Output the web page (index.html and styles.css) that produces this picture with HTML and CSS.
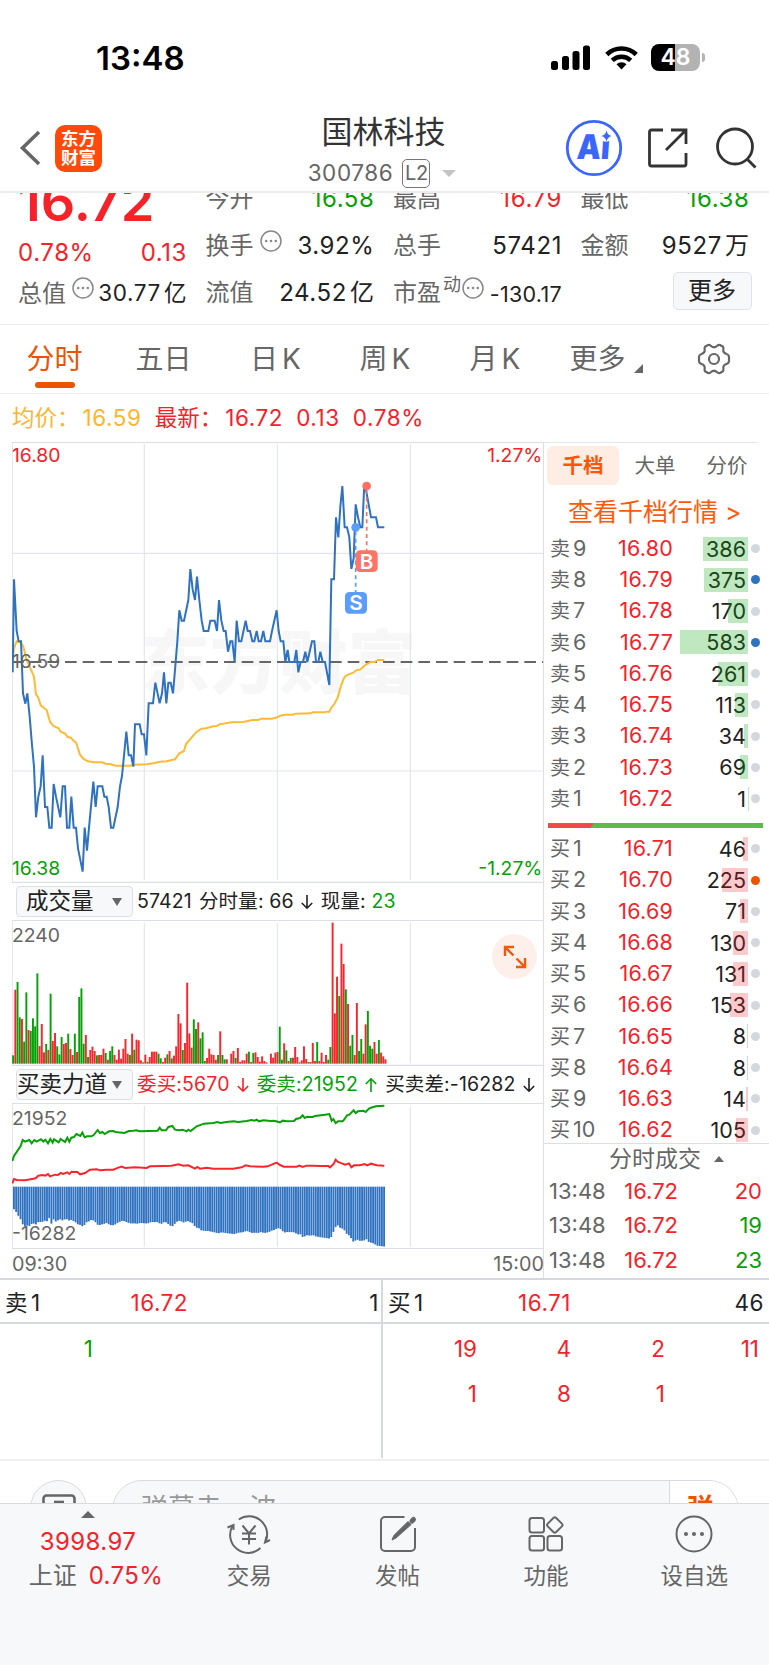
FILE: index.html
```html
<!DOCTYPE html>
<html lang="zh-CN">
<head>
    <meta charset="UTF-8">
    <title>国林科技 300786</title>
    <link rel="stylesheet" href="styles.css">
</head>
<body>
    <div class="status-bar">
        <span class="clock">13:48</span>
        <div class="status-icons">
            <svg width="40" height="26" viewBox="0 0 40 26">
                <rect x="0" y="16" width="7" height="9" rx="2.5"/>
                <rect x="11" y="11" width="7" height="14" rx="2.5"/>
                <rect x="21.500" y="6" width="7" height="19" rx="2.500"/>
                <rect x="32" y="0.500" width="7" height="24.500" rx="2.500"/>
            </svg>
            <svg class="wifi" width="33" height="26" viewBox="0 0 33 26" fill="none" stroke="#000" stroke-width="4.600">
                <path d="M1.800 9.500a21 21 0 0 1 29.400 0"/>
                <path d="M7.300 15.400a13.500 13.500 0 0 1 18.400 0"/>
                <path d="M16.500 24.500l-5-5.300a7.500 7.500 0 0 1 10 0z" fill="#000" stroke="none"/>
            </svg>
            <div class="battery"><span>48</span></div>
            <i class="battery-nub"></i>
        </div>
    </div>

    <header class="header">
        <div class="header-left">
            <svg width="22" height="36" viewBox="0 0 22 36" fill="none" stroke="#666" stroke-width="3.600">
                <path d="M20 2L3.500 18 20 34"/>
            </svg>
            <div class="logo">东方<br>财富</div>
        </div>
        <div class="title-box">
            <div class="title">国林科技</div>
            <div class="code"><span class="digits">300786</span><span class="level">L2</span><i class="caret"></i></div>
        </div>
        <div class="header-right">
            <svg width="58" height="58" viewBox="0 0 58 58">
                <circle cx="29" cy="29" r="26.700" fill="#fff" stroke="#3a66ff" stroke-width="2.800"/>
                <text class="ai" x="14" y="40.500" textLength="33" lengthAdjust="spacingAndGlyphs" transform="skewX(-4)">Ai</text>
                <circle cx="41" cy="16.500" r="6.200" fill="#fff"/>
                <path d="M41.500 11.500q1 4.500 5 5.500q-4 1-5 5.500q-1-4.500-5-5.500q4-1 5-5.500z" fill="#3a66ff"/>
            </svg>
            <svg class="share" width="42" height="42" viewBox="0 0 42 42" fill="none" stroke="#333" stroke-width="2.800">
                <path d="M16 3H4.500a2 2 0 0 0-2 2v32a2 2 0 0 0 2 2H37a2 2 0 0 0 2-2V26"/>
                <path d="M24 3h15v14M39 3L19 23"/>
            </svg>
            <svg class="search" width="42" height="42" viewBox="0 0 42 42" fill="none" stroke="#333" stroke-width="2.800">
                <circle cx="20" cy="19.500" r="17.500"/>
                <path d="M32 32l8.500 8.500"/>
            </svg>
        </div>
    </header>

    <section class="quote">
        <div class="quote-grid">
            <div class="col col-main">
                <div class="big red">16.72</div>
                <div class="cell change red"><span>0.78%</span><span>0.13</span></div>
                <div class="cell last">
                    <span class="name">总值<svg class="info"><use href="#dots"/></svg></span>
                    <span class="val small">30.77<i class="unit">亿</i></span>
                </div>
            </div>
            <div class="col">
                <div class="cell"><span class="name">今开</span><span class="green">16.58</span></div>
                <div class="cell"><span class="name">换手<svg class="info"><use href="#dots"/></svg></span><span class="val">3.92%</span></div>
                <div class="cell"><span class="name">流值</span><span class="val">24.52<i class="unit">亿</i></span></div>
            </div>
            <div class="col">
                <div class="cell"><span class="name">最高</span><span class="red">16.79</span></div>
                <div class="cell"><span class="name">总手</span><span class="val">57421</span></div>
                <div class="cell"><span class="name">市盈<sup>动</sup><svg class="info tight"><use href="#dots"/></svg></span><span class="val pe">-130.17</span></div>
            </div>
            <div class="col">
                <div class="cell"><span class="name">最低</span><span class="green">16.38</span></div>
                <div class="cell"><span class="name">金额</span><span class="val">9527<i class="unit">万</i></span></div>
                <div class="cell"><button class="more">更多</button></div>
            </div>
        </div>
    </section>

    <nav class="tabs">
        <span class="tab active">分时</span>
        <span class="tab">五日</span>
        <span class="tab">日<b>K</b></span>
        <span class="tab">周<b>K</b></span>
        <span class="tab">月<b>K</b></span>
        <span class="tab">更多<i class="corner"></i></span>
        <span class="tab">
            <svg width="34" height="34" viewBox="-17 -17 34 34" fill="none" stroke="#666" stroke-width="2.200" stroke-linejoin="round">
                <path d="M-6 -14 Q-4 -14.500 -3 -13 Q0 -10.500 3 -13 Q4 -14.500 6 -14 L9 -12.200 Q9.800 -11 9.300 -9.500 Q9 -6 12.500 -5 Q14.500 -4.500 15 -2.500 V2.500 Q14.500 4.500 12.500 5 Q9 6 9.300 9.500 Q9.800 11 9 12.200 L6 14 Q4 14.500 3 13 Q0 10.500 -3 13 Q-4 14.500 -6 14 L-9 12.200 Q-9.800 11 -9.300 9.500 Q-9 6 -12.500 5 Q-14.500 4.500 -15 2.500 V-2.500 Q-14.500 -4.500 -12.500 -5 Q-9 -6 -9.300 -9.500 Q-9.800 -11 -9 -12.200 Z"/>
                <circle r="5"/>
            </svg>
        </span>
    </nav>

    <div class="legend">
        <span class="avg">均价：<em>16.59</em></span>
        <span class="red">最新：<em>16.72</em></span>
        <span class="red digits">0.13</span>
        <span class="red digits">0.78%</span>
    </div>

    <main class="board">
        <div class="charts">
            <!-- 分时走势 -->
            <svg class="chart" width="532" height="441" viewBox="36 36 1596 1323">
                <text class="watermark" x="422" y="774">东方财富</text>
                <path class="grid" d="M37 38V1356M433 42V1350M832 42V1350M1231 42V1350M36 370H1631M36 1023H1631"/>
                <path class="frame" d="M36 37.500H1632M36 1357H1632"/>
                <path class="mid" d="M36 696H1632"/>
                <polyline class="line yellow" points="38,690 42,655 50,634 63,638 70,650 80,690 102,740 108,793 115,803 122,826 140,840 150,875 160,888 175,894 182,905 195,911 203,921 213,923 221,933 228,937 240,974 250,986 262,993 280,997 305,997 318,1001 330,1002 347,1007 390,1007 402,1004 440,1003 460,1000 480,995 500,994 525,988 538,970 552,963 558,942 590,905 605,896 618,895 640,889 650,888 658,883 695,877 730,876 757,870 775,870 782,866 815,866 832,862 840,857 855,854 878,854 888,851 932,850 938,847 972,847 978,845 988,845 995,832 1003,822 1013,803 1022,770 1033,742 1041,735 1060,728 1068,721 1080,719 1090,710 1100,702 1112,696 1124,696 1134,690 1153,690"/>
                <polyline class="line blue" points="38,727 42,448 50,603 56,634 63,634 69,790 76,821 82,790 89,860 96,945 102,1010 108,1162 115,1100 122,1069 128,976 135,1131 142,1131 148,1193 155,1193 161,1062 168,1100 181,1162 188,1069 195,1069 201,1193 208,1193 214,1100 221,1193 228,1193 234,1255 248,1325 254,1193 261,1262 267,1193 280,1055 287,1131 293,1069 307,1069 313,1100 320,1100 326,1131 333,1193 340,1193 353,1131 360,1069 366,1038 379,905 386,976 393,976 400,1010 405,883 419,883 425,913 432,913 439,976 446,820 459,820 466,758 479,820 486,790 492,727 499,820 505,758 512,758 519,790 525,720 532,634 538,541 545,572 552,572 565,510 571,417 578,479 585,510 591,440 598,510 605,572 611,603 625,603 631,572 644,572 651,603 657,510 664,572 671,603 677,603 684,665 691,634 697,634 704,696 710,572 717,634 724,634 737,572 743,603 750,603 757,634 763,634 770,603 776,634 783,634 790,603 796,634 810,634 816,603 830,541 836,603 842,634 850,634 856,696 863,660 868,696 883,696 889,660 895,727 902,696 909,696 916,665 922,696 936,634 943,634 948,696 955,696 961,665 968,696 975,696 988,765 994,448 1002,448 1008,262 1015,322 1021,230 1027,168 1034,292 1041,292 1048,322 1054,417 1061,385 1067,223 1074,262 1081,292 1087,292 1093,160 1100,190 1113,262 1128,262 1134,292 1153,292"/>
                <path class="drop sell" d="M1067 304V487"/>
                <path class="drop buy" d="M1100 180V362"/>
                <circle cx="1067" cy="292" r="13" fill="#5b9dff"/>
                <circle cx="1100" cy="168" r="13" fill="#ff6f61"/>
                <rect x="1035" y="486" width="66" height="65" rx="13" fill="#5b9dff"/>
                <text class="flag" x="1068" y="541">S</text>
                <rect x="1067" y="361" width="66" height="65" rx="13" fill="#ff7467"/>
                <text class="flag" x="1100" y="416">B</text>
                <text class="axis up" x="36" y="95">16.80</text>
                <text class="axis" x="36" y="715">16.59</text>
                <text class="axis down" x="36" y="1335">16.38</text>
                <text class="axis up end" x="1627" y="95">1.27%</text>
                <text class="axis down end" x="1627" y="1335">-1.27%</text>
            </svg>

            <div class="toolbar">
                <div class="select"><span class="select-main">成交量</span><i class="down-caret"></i></div>
                <span>57421</span><span>分时量: 66</span><svg class="arrow"><use href="#arrow-down"/></svg><span>现量: <em class="green">23</em></span>
            </div>

            <!-- 成交量 -->
            <div class="pane">
                <svg class="chart" width="532" height="146" viewBox="36 120 1596 438">
                    <path class="grid" d="M37 122V556M433 129V550M832 129V550M1231 129V550"/>
                    <path class="frame" d="M36 121.500H1632M36 556H1632"/>
                    <g id="volume"></g>
                    <text class="axis" x="36" y="186">2240</text>
                </svg>
                <div class="expand">
                    <svg width="26" height="26" viewBox="0 0 26 26" fill="none" stroke="#ee5a0e" stroke-width="2.400">
                        <path d="M3 12V3h9M3 3l8.500 8.500M23 14v9h-9M23 23l-8.500-8.500"/>
                    </svg>
                </div>
            </div>

            <div class="toolbar force">
                <div class="select"><span>买卖力道</span><i class="down-caret"></i></div>
                <span class="red">委买:5670</span><svg class="arrow red"><use href="#arrow-down"/></svg>
                <span class="green">委卖:21952</span><svg class="arrow green"><use href="#arrow-up"/></svg>
                <span>买卖差:-16282</span><svg class="arrow"><use href="#arrow-down"/></svg>
            </div>

            <!-- 买卖力道 -->
            <svg class="chart" width="532" height="146" viewBox="36 669 1596 438">
                <path class="grid" d="M37 671V1105M433 678V1100M832 678V1100M1231 678V1100"/>
                <path class="frame" d="M36 670.500H1632M36 1105.500H1632"/>
                <g id="force"></g>
                <polyline id="sellLine" class="line lime" points="37,843 42,828 62,798 68,780 75,785 88,780 95,790 103,780 110,785 123,778 130,785 136,779 144,790 151,777 158,788 162,778 176,787 182,777 195,786 202,773 208,785 214,773 222,771 229,762 241,768 247,758 254,772 261,769 274,769 281,765 293,750 300,759 307,756 314,762 327,754 340,753 346,756 373,759 387,753 400,752 410,751 418,754 473,752 479,743 485,751 498,751 505,741 517,738 525,749 538,751 548,749 560,754 565,749 572,753 590,739 612,731 640,729 652,726 662,729 680,726 700,724 715,726 740,723 755,720 764,722 770,719 777,724 790,721 812,723 822,722 840,727 848,722 860,724 882,723 888,717 900,714 908,706 914,714 922,710 938,711 945,708 975,704 988,702 995,722 1000,717 1007,729 1014,724 1028,724 1034,717 1041,706 1048,704 1061,691 1067,699 1074,694 1090,692 1097,696 1107,686 1113,683 1128,679 1153,677"/>
                <polyline id="buyLine" class="line crimson" points="37,910 42,897 50,900 75,901 100,896 108,894 115,887 128,885 136,887 144,882 150,889 165,884 174,885 182,879 190,882 202,877 208,882 215,875 232,876 240,883 255,879 270,869 290,868 300,871 320,869 340,869 355,863 365,860 375,864 405,862 440,864 450,859 490,858 515,857 535,853 550,857 565,856 585,866 592,861 600,866 620,863 640,866 700,866 725,862 737,856 750,859 790,860 803,859 815,854 830,848 840,855 852,860 890,860 898,857 908,861 920,857 940,857 960,858 985,858 990,862 1001,852 1007,839 1014,846 1025,850 1035,854 1047,850 1054,862 1062,856 1080,856 1094,852 1102,856 1113,851 1130,856 1153,857"/>
                <text class="axis" x="36" y="736">21952</text>
                <text class="axis" x="36" y="1081">-16282</text>
            </svg>
            <div class="time-axis"><span>09:30</span><span>15:00</span></div>
        </div>

        <aside class="depth">
            <div class="depth-tabs">
                <span class="depth-tab on">千档</span>
                <span class="depth-tab">大单</span>
                <span class="depth-tab">分价</span>
            </div>
            <div class="depth-link">查看千档行情 &gt;</div>
            <div class="orders" id="asks"></div>
            <div class="ratio"><i></i></div>
            <div class="orders bids" id="bids"></div>
            <div class="deals-title">分时成交<i class="up-caret"></i></div>
            <div class="deal"><span>13:48</span><span class="red">16.72</span><span class="red">20</span></div>
            <div class="deal"><span>13:48</span><span class="red">16.72</span><span class="green">19</span></div>
            <div class="deal"><span>13:48</span><span class="red">16.72</span><span class="green">23</span></div>
        </aside>
    </main>

    <section class="queue">
        <div class="side">
            <div class="side-head"><span>卖<b>1</b></span><span class="red">16.72</span><span>1</span></div>
            <div class="lots green"><span>1</span></div>
        </div>
        <div class="side">
            <div class="side-head"><span>买<b>1</b></span><span class="red">16.71</span><span>46</span></div>
            <div class="lots red"><span>19</span><span>4</span><span>2</span><span>11</span><span>1</span><span>8</span><span>1</span></div>
        </div>
    </section>

    <div class="danmu">
        <div class="danmu-icon">
            <svg width="34" height="26" viewBox="0 0 34 26" fill="none" stroke="#666" stroke-width="2.600">
                <rect x="1.500" y="1.500" width="31" height="24" rx="3"/>
                <path d="M12 8h10"/>
            </svg>
        </div>
        <div class="danmu-input"><span>弹幕走一波</span><b>弹</b></div>
    </div>

    <footer class="tabbar">
        <div class="index">
            <i class="up-caret"></i>
            <div class="red">3998.97</div>
            <div>上证<span class="red">0.75%</span></div>
        </div>
        <div class="item">
            <svg width="44" height="40" viewBox="0 0 44 40" fill="none" stroke="#666" stroke-width="2">
                <path d="M11.800 5.500A18 18 0 0 1 39 26.500M33.500 34A18 18 0 0 1 5.500 12"/>
                <path d="M.500 13.500l6-2.500 0 5M43 26l-5 2.500 1.500-6"/>
                <path d="M15.500 11.500l6.500 8 6.500-8M22 19.500v11M15 19.500h14M15 25h14"/>
            </svg>
            <span>交易</span>
        </div>
        <div class="item">
            <svg width="40" height="40" viewBox="0 0 40 40" fill="none" stroke="#666" stroke-width="2">
                <path d="M26.500 3H7a4 4 0 0 0-4 4v26a4 4 0 0 0 4 4h26a4 4 0 0 0 4-4V14"/>
                <path d="M14 26l1.800-4.500L30 7.500l3.200 3L18 24z" fill="#666" stroke-width="1"/>
                <path d="M34 7l1.500-1.500" stroke-width="5" stroke-linecap="round"/>
            </svg>
            <span>发帖</span>
        </div>
        <div class="item">
            <svg width="40" height="40" viewBox="0 0 40 40" fill="none" stroke="#666" stroke-width="2" stroke-linejoin="round">
                <rect x="3.500" y="4" width="14.500" height="14.500" rx="2.500"/>
                <rect x="3.500" y="22" width="14.500" height="14.500" rx="2.500"/>
                <rect x="21.500" y="22" width="14.500" height="14.500" rx="2.500"/>
                <rect x="22.800" y="5" width="12" height="12" rx="2" transform="rotate(45 28.800 11)"/>
            </svg>
            <span>功能</span>
        </div>
        <div class="item">
            <svg width="40" height="40" viewBox="0 0 40 40">
                <circle cx="20" cy="20" r="17.500" fill="none" stroke="#666" stroke-width="2"/>
                <g fill="#666"><circle cx="12" cy="20" r="2"/><circle cx="20" cy="20" r="2"/><circle cx="28" cy="20" r="2"/></g>
            </svg>
            <span>设自选</span>
        </div>
    </footer>

    <svg class="defs">
        <symbol id="dots" viewBox="0 0 22 22">
            <circle cx="11" cy="11" r="10" fill="none" stroke="#888" stroke-width="1.500"/>
            <g fill="#888"><circle cx="6.200" cy="11" r="1.300"/><circle cx="11" cy="11" r="1.300"/><circle cx="15.800" cy="11" r="1.300"/></g>
        </symbol>
        <symbol id="arrow-down" viewBox="0 0 12 16"><path d="M6 1v13M.800 9L6 14.200 11.200 9" fill="none" stroke="currentColor" stroke-width="1.600"/></symbol>
        <symbol id="arrow-up" viewBox="0 0 12 16"><path d="M6 15V2M.800 7L6 1.800 11.200 7" fill="none" stroke="currentColor" stroke-width="1.600"/></symbol>
    </svg>
    <script src="script.js"></script>
</body>
</html>
```
FILE: styles.css
```css
* {
    box-sizing: border-box;
}

body {
    margin: 0;
    width: 769px;
    height: 1665px;
    overflow: hidden;
    background: #fff;
    color: #222;
    font-family: Inter, "Noto Sans CJK SC", sans-serif;
    font-size: 22px;
    line-height: 1;
}

i, em {
    font-style: normal;
}

.red {
    color: #f5222a;
}

.green {
    color: #07a007;
}

.defs {
    position: absolute;
    width: 0;
    height: 0;
}

/* status bar */
.status-bar {
    display: flex;
    justify-content: space-between;
    align-items: center;
    height: 115px;
    padding: 0 64px 0 96px;
    color: #000;
}

.clock {
    padding-top: 2px;
    font-size: 33px;
    font-weight: 600;
}

.status-icons {
    display: flex;
    align-items: center;
}

.wifi {
    margin-left: 14px;
}

.battery {
    width: 49px;
    height: 27px;
    margin-left: 13px;
    border-radius: 8px;
    background: linear-gradient(to right, #000 48%, #b3b3b3 48%);
    color: #fff;
    font-size: 23px;
    font-weight: 600;
    line-height: 27px;
    text-align: center;
}

.battery-nub {
    width: 3px;
    height: 9px;
    margin-left: 2px;
    border-radius: 0 4px 4px 0;
    background: #b3b3b3;
}

/* header */
.header {
    display: grid;
    grid-template-columns: 220px 1fr 220px;
    height: 78px;
    border-bottom: 2px solid #ececec;
}

.header-left {
    display: flex;
    align-items: center;
    height: 66px;
    padding-left: 19px;
}

.logo {
    width: 47px;
    height: 47px;
    margin-left: 14px;
    padding-top: 4px;
    border-radius: 10px;
    background: #ff4a0a;
    color: #fff;
    font-size: 17.5px;
    font-weight: 700;
    line-height: 19.5px;
    text-align: center;
}

.title-box {
    text-align: center;
}

.title {
    height: 34px;
    padding-right: 2px;
    color: #333;
    font-size: 31px;
    line-height: 34px;
}

.code {
    display: flex;
    justify-content: center;
    align-items: center;
    height: 48px;
    padding-right: 5px;
    color: #666;
    font-size: 22.5px;
}

.digits {
    letter-spacing: 0.6px;
}

.level {
    width: 28px;
    height: 29px;
    margin-left: 9px;
    border: 1.5px solid #777;
    border-radius: 5px;
    font-size: 20px;
    line-height: 27px;
    letter-spacing: -0.5px;
}

.caret {
    margin-left: 12px;
    border: 7px solid transparent;
    border-top-color: #c4c4c4;
    border-bottom: 0;
}

.header-right {
    display: flex;
    align-items: center;
    height: 66px;
    padding-left: 16px;
}

.ai {
    fill: #3a66ff;
    font-size: 34px;
    font-weight: 900;
}

.share {
    margin-left: 24px;
}

.search {
    margin-left: 26px;
}

/* quote */
.quote {
    height: 132px;
    overflow: hidden;
    border-bottom: 1px solid #eee;
}

.quote-grid {
    display: grid;
    grid-template-columns: repeat(4, 169px);
    column-gap: 18.5px;
    margin-top: -18px;
    padding-left: 18px;
    font-size: 24px;
}

.cell {
    display: flex;
    justify-content: space-between;
    align-items: center;
    height: 47.4px;
    white-space: nowrap;
}

.cell > span {
    letter-spacing: 0.6px;
}

.cell > .name {
    letter-spacing: 0;
}

.big {
    height: 54px;
    font-size: 54px;
    font-weight: 600;
    line-height: 54px;
}

.change {
    height: 47px;
}

.last {
    height: 35px;
}

.name {
    display: flex;
    align-items: center;
    color: #666;
}

.name sup {
    margin: -16px 0 0 2px;
    font-size: 18px;
    line-height: 18px;
}

.info {
    width: 22px;
    height: 22px;
    margin: -11px 0 0 6px;
}

.info.tight {
    margin-left: 1px;
}

.val {
    color: #222;
}

.small {
    font-size: 22.5px;
}

.cell > .pe {
    padding-top: 3px;
    font-size: 21.5px;
    letter-spacing: 0.3px;
}

.unit {
    margin-left: 3px;
}

.more {
    width: 79px;
    height: 38px;
    margin: -5px -2px 0 auto;
    padding: 0;
    flex: none;
    border: 1.5px solid #dfe2e8;
    border-radius: 5px;
    background: #f7f8fa;
    color: #222;
    font: 24px/34px Inter, "Noto Sans CJK SC", sans-serif;
}

/* period tabs */
.tabs {
    display: grid;
    grid-template-columns: 109px 109px 115px 104px 116px 106px 1fr;
    height: 69px;
    border-bottom: 1px solid #eee;
    color: #666;
    font-size: 28px;
}

.tab {
    display: flex;
    justify-content: center;
    align-items: center;
    position: relative;
}

.tab b {
    margin-left: 4px;
    font-weight: 400;
}

.tab.active {
    color: #ea5504;
}

.tab.active::after {
    content: '';
    position: absolute;
    left: 35px;
    bottom: 5px;
    width: 40px;
    height: 6px;
    border-radius: 3px;
    background: #ea5504;
}

.corner {
    margin: 18px 0 0 8px;
    border-left: 9px solid transparent;
    border-bottom: 9px solid #666;
}

.legend {
    display: flex;
    align-items: center;
    gap: 13px;
    height: 48px;
    padding-left: 12px;
    font-size: 22.5px;
}

.legend .avg {
    color: #fdb52e;
}

.legend em {
    margin-left: 3px;
    letter-spacing: 0.6px;
}

/* charts */
.board {
    display: flex;
    height: 838px;
    border-bottom: 2px solid #d5d8df;
}

.charts {
    width: 532px;
    margin-left: 12px;
}

.chart {
    display: block;
}

.grid {
    fill: none;
    stroke: #e2e5ee;
    stroke-width: 3.5;
}

.frame {
    fill: none;
    stroke: #dcdfe6;
    stroke-width: 3.5;
}

.mid {
    stroke: #666;
    stroke-width: 5.5;
    stroke-dasharray: 35 18;
}

.watermark {
    fill: #f7f7f7;
    font-size: 207px;
    font-weight: 900;
}

.line {
    fill: none;
    stroke-width: 6;
}

.blue {
    stroke: #2f72c0;
}

.yellow {
    stroke: #fdbb35;
}

.lime {
    stroke: #07a007;
}

.crimson {
    stroke: #f8262c;
}

.drop {
    stroke-width: 5;
    stroke-dasharray: 12 10;
}

.drop.sell {
    stroke: #5b9dff;
}

.drop.buy {
    stroke: #ff6f61;
}

.flag {
    fill: #fff;
    font-size: 62px;
    font-weight: 600;
    text-anchor: middle;
}

.axis {
    fill: #666;
    font-size: 58px;
}

.axis.up {
    fill: #f5222a;
}

.axis.down {
    fill: #07a007;
}

.axis.end {
    text-anchor: end;
}

.toolbar {
    display: flex;
    align-items: center;
    height: 37px;
    padding-left: 4px;
    font-size: 19.5px;
    white-space: nowrap;
}

.toolbar > span {
    margin-right: 7px;
    padding-top: 1px;
    letter-spacing: 0.15px;
}

.select {
    display: flex;
    justify-content: space-between;
    align-items: center;
    width: 117px;
    height: 31px;
    margin-right: 4px;
    padding: 0 10px 0 0;
    border: 1px solid #dcdfe6;
    border-radius: 4px;
    background: #f7f8fa;
    font-size: 22.5px;
}

.select-main {
    padding-left: 9px;
}

.down-caret {
    border: 5px solid transparent;
    border-top: 8px solid #666;
    border-bottom: 0;
}

.up-caret {
    display: inline-block;
    border: 5px solid transparent;
    border-bottom: 6px solid #666;
    border-top: 0;
}

.arrow {
    width: 12px;
    height: 16px;
    margin-right: 8px;
}

.pane {
    position: relative;
}

.expand {
    position: absolute;
    top: 14px;
    right: 7px;
    display: flex;
    justify-content: center;
    align-items: center;
    width: 45px;
    height: 45px;
    border-radius: 50%;
    background: #fdf0ea;
}

.bar-up {
    fill: #f8262c;
}

.bar-down {
    fill: #07a007;
}

.bar-diff {
    fill: #2f72c0;
}

.time-axis {
    display: flex;
    justify-content: space-between;
    height: 29px;
    color: #666;
    font-size: 19.8px;
    line-height: 31px;
}

/* order book, shares its border with the charts */
.depth {
    width: 226px;
    margin-left: -1px;
    border-left: 1px solid #dcdfe6;
}

.depth-tabs {
    display: flex;
    align-items: center;
    width: 213px;
    height: 45px;
    padding-left: 3px;
    border-top: 1px solid #e4e6ea;
    color: #666;
    font-size: 20.5px;
}

.depth-tab {
    width: 72px;
    flex: none;
    line-height: 39px;
    text-align: center;
}

.depth-tab.on {
    border-radius: 6px;
    background: #ffece3;
    color: #ff5500;
    font-weight: 600;
}

.depth-link {
    height: 46px;
    padding-left: 24px;
    color: #ff5a0a;
    font-size: 25px;
    line-height: 51px;
    white-space: nowrap;
}

.order {
    display: grid;
    grid-template-columns: 41px 82px 74px 1fr;
    align-items: center;
    height: 31.25px;
    padding-left: 6px;
}

.order .level-name {
    color: #666;
    font-size: 20px;
    white-space: nowrap;
}

.level-name b {
    margin-left: 3px;
    font-size: 21.5px;
    font-weight: 400;
}

.order .price {
    color: #f5222a;
    font-size: 21.5px;
    letter-spacing: 0.2px;
    text-align: right;
}

.amount {
    position: relative;
    height: 24px;
    padding-right: 1px;
    font-size: 21.5px;
    line-height: 24px;
    text-align: right;
}

.amount i {
    position: absolute;
    top: 0;
    right: -1px;
    height: 24px;
    background: rgba(10, 165, 10, 0.26);
}

.bids .amount i {
    background: rgba(245, 34, 42, 0.24);
}

.dot {
    width: 9px;
    height: 9px;
    margin-left: 4px;
    border-radius: 50%;
    background: #d3d7de;
}

.dot.big-sell {
    background: #2f72c0;
}

.dot.big-buy {
    background: #ea5504;
}

.ratio {
    width: 215px;
    height: 5px;
    margin: 9px 0 5px 4px;
    background: #5bbd45;
}

.ratio i {
    display: block;
    width: 46px;
    height: 5px;
    background: #ef4a4a;
    clip-path: polygon(0 0, 100% 0, 42px 100%, 0 100%);
}

.bids {
    height: 311px;
    border-bottom: 1px solid #dcdfe6;
}

.deals-title {
    display: flex;
    align-items: center;
    height: 30px;
    padding-left: 65px;
    color: #666;
    font-size: 23px;
}

.deals-title .up-caret {
    margin-left: 13px;
}

.deal {
    display: grid;
    grid-template-columns: 61px 68px 84px;
    align-items: center;
    height: 34.5px;
    padding: 0 0 2px 5px;
    text-align: right;
}

.deal span:first-child {
    color: #666;
    text-align: left;
}

/* level-1 queue */
.queue {
    display: grid;
    grid-template-columns: 383px 386px;
    height: 181px;
    border-bottom: 2px solid #eeeff2;
    font-size: 22.5px;
}

.side {
    height: 178px;
}

.side:first-child {
    border-right: 2px solid #d5d8df;
}

.side-head {
    display: grid;
    grid-template-columns: 80px 103px 1fr;
    align-items: center;
    height: 44px;
    padding: 4px 5px 0;
    border-bottom: 2px solid #d5d8df;
    text-align: right;
}

.side-head span {
    letter-spacing: 0.5px;
}

.side-head span:first-child {
    text-align: left;
}

.side-head b {
    margin-left: 3px;
    font-weight: 400;
}

.side-head span:last-child {
    margin-right: -3px;
}

.side:last-child .side-head span:last-child {
    margin-right: 0;
}

.lots {
    display: grid;
    grid-template-columns: repeat(4, 94px);
    grid-auto-rows: 45.5px;
    align-items: center;
    padding-top: 2px;
    text-align: right;
}

.side:first-child .lots {
    margin-left: -1px;
}

/* danmu bar, cut by the tab bar */
.danmu {
    display: flex;
    height: 42px;
    padding: 19px 0 0 30px;
    overflow: hidden;
}

.danmu-icon {
    width: 57px;
    height: 57px;
    padding: 13px 0 0 11px;
    flex: none;
    border: 1px solid #d8dbe2;
    border-radius: 50%;
    background: #f7f8fa;
}

.danmu-input {
    display: flex;
    width: 627px;
    height: 60px;
    margin-left: 25px;
    overflow: hidden;
    flex: none;
    border: 1px solid #d8dbe2;
    border-radius: 30px;
    background: #f7f8fa;
    color: #999;
    font-size: 27px;
    line-height: 55px;
}

.danmu-input span {
    width: 557px;
    padding-left: 28px;
    flex: none;
    border-right: 1px solid #d8dbe2;
}

.danmu-input b {
    width: 70px;
    padding-left: 17px;
    background: #fff;
    color: #ea5504;
}

/* bottom tab bar */
.tabbar {
    display: grid;
    grid-template-columns: 175px repeat(4, 148.4px);
    height: 162px;
    border-top: 1px solid #d8dbe2;
    background: #f7f8fa;
    color: #666;
}

.index {
    padding: 7px 0 0 1px;
    font-size: 24px;
    text-align: center;
    line-height: 34px;
}

.index .up-caret {
    display: block;
    width: 0;
    margin: 0 auto;
    border-width: 0 7px 7px;
}

.index .red {
    padding-top: 7px;
    letter-spacing: 0.4px;
}

.index div:last-child {
    padding: 0 0 0 16px;
}

.index span.red {
    margin-left: 12px;
}

.item {
    display: flex;
    flex-direction: column;
    align-items: center;
    padding-top: 10px;
    font-size: 22.5px;
}

.item span {
    margin-top: 11px;
}
```
FILE: script.js
```js
// 每分钟成交量，r 涨 g 跌
const volume = 'g25 r222 g245 g139 r134 g66 g214 r101 g98 g136 g112 g271 r53 r119 r34 g59 r41 g210 r68 r92 g52 g28 g80 r59 r62 g90 r44 r26 g90 r35 g200 g226 g60 r86 g20 r41 r51 r38 g25 r26 r26 r45 g32 r12 g38 g52 r26 r12 r42 r15 r45 r74 r30 g26 r90 g42 r72 r70 r10 g4 r27 g6 r20 r36 r36 r36 g30 g16 r5 r18 g28 r38 g16 r24 r52 r149 r121 g41 r62 r243 r91 r48 g133 g104 r124 g76 g94 g8 r17 r45 r28 r26 r12 g26 r97 g26 g13 r13 r0 r30 r38 g17 r47 r5 r10 r10 r30 g36 r5 g32 r34 r20 r6 r22 r8 r4 r0 r30 r18 r33 r35 g111 g12 r61 g40 r8 g17 r18 r50 r20 g4 r10 r52 r14 g5 r5 r62 r8 g65 r8 r33 r5 r26 g12 g50 r423 r151 r261 g203 r360 r299 g223 r179 g54 g86 r26 r182 g38 g74 r30 r118 g158 g54 g45 r65 r30 g71 r33 r22 r13'.split(' ');

const STEP = 6.61;

function rect(parent, x, y, width, height, cls) {
    const el = document.createElementNS('http://www.w3.org/2000/svg', 'rect');
    el.setAttribute('x', x);
    el.setAttribute('y', y);
    el.setAttribute('width', width);
    el.setAttribute('height', height);
    el.setAttribute('class', cls);
    parent.appendChild(el);
}

const volumeBox = document.getElementById('volume');
volume.forEach((v, i) => {
    const h = Number(v.slice(1));
    rect(volumeBox, 36.5 + i * STEP, 551 - h, 5.8, h, v[0] === 'r' ? 'bar-up' : 'bar-down');
});

// 折线在 x 处的 y 值
function valueAt(id, x) {
    const pts = document.getElementById(id).getAttribute('points').split(' ').map(p => p.split(',').map(Number));
    for (let i = 1; i < pts.length; i++) {
        if (x <= pts[i][0]) {
            const [x0, y0] = pts[i - 1];
            const [x1, y1] = pts[i];
            return y0 + (y1 - y0) * (x - x0) / (x1 - x0);
        }
    }
    return pts[pts.length - 1][1];
}

// 买卖差 = 委卖 - 委买，向下画
const forceBox = document.getElementById('force');
for (let i = 0; i < 169; i++) {
    const x = 39 + i * STEP;
    rect(forceBox, x, 920, 5.6, valueAt('buyLine', x) - valueAt('sellLine', x), 'bar-diff');
}

const asks = [['9', '16.80', 386], ['8', '16.79', 375, 'big-sell'], ['7', '16.78', 170], ['6', '16.77', 583, 'big-sell'], ['5', '16.76', 261], ['4', '16.75', 113], ['3', '16.74', 34], ['2', '16.73', 69], ['1', '16.72', 1]];
const bids = [['1', '16.71', 46], ['2', '16.70', 225, 'big-buy'], ['3', '16.69', 71], ['4', '16.68', 130], ['5', '16.67', 131], ['6', '16.66', 153], ['7', '16.65', 8], ['8', '16.64', 8], ['9', '16.63', 14], ['10', '16.62', 105]];

function renderOrders(id, side, rows) {
    document.getElementById(id).innerHTML = rows.map(([n, price, amount, dot]) => `
        <div class="order">
            <span class="level-name">${side}<b>${n}</b></span>
            <span class="price">${price}</span>
            <span class="amount">${amount}<i style="width:${(amount * 68 / 583).toFixed(1)}px"></i></span>
            <span class="dot ${dot || ''}"></span>
        </div>`).join('');
}

renderOrders('asks', '卖', asks);
renderOrders('bids', '买', bids);
```
